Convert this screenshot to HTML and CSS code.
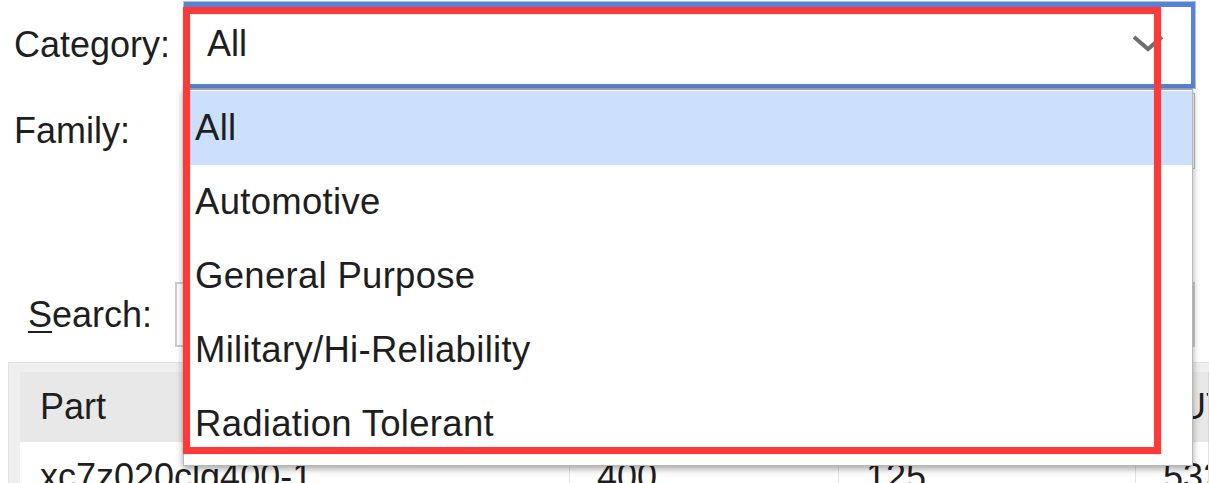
FILE: index.html
```html
<!DOCTYPE html>
<html>
<head>
<meta charset="utf-8">
<link rel="stylesheet" href="styles.css">
</head>
<body>
<div class="form">
  <div class="field category">
    <span class="field-label">Category:</span>
    <div class="combo">
      <span class="combo-value">All</span>
      <svg class="chevron" viewBox="0 0 32 18" width="32" height="18"><path d="M2 2 L16 14 L30 2" fill="none" stroke="#6e6e6e" stroke-width="4"/></svg>
    </div>
  </div>
  <div class="field family">
    <span class="field-label">Family:</span>
    <div class="combo-plain"></div>
  </div>
  <div class="field search">
    <span class="field-label search-label"><u>S</u>earch:</span>
    <div class="search-input"></div>
  </div>
</div>

<div class="table">
  <div class="trow thead">
    <div class="cell first">Part</div>
    <div class="cell">I/O Pin Count</div>
    <div class="cell">Available IOBs</div>
    <div class="cell">LUT Elements</div>
  </div>
  <div class="trow tbody">
    <div class="cell first">xc7z020clg400-1</div>
    <div class="cell">400</div>
    <div class="cell">125</div>
    <div class="cell">53200</div>
  </div>
</div>

<div class="dropdown">
  <div class="option selected">All</div>
  <div class="option">Automotive</div>
  <div class="option">General Purpose</div>
  <div class="option">Military/Hi-Reliability</div>
  <div class="option">Radiation Tolerant</div>
</div>

<div class="annotation"></div>
</body>
</html>
```
FILE: styles.css
```css
html, body {
  margin: 0;
  padding: 0;
}
body {
  width: 1209px;
  height: 483px;
  overflow: hidden;
  position: relative;
  background: #ffffff;
  font-family: "Liberation Sans", Arial, sans-serif;
  font-size: 36px;
  color: #1e1e1e;
}

.form {
  padding-left: 14px;
}
.field {
  display: flex;
  align-items: center;
}
.field-label {
  width: 170px;
  flex: none;
  line-height: 40px;
  white-space: nowrap;
}
.category {
  margin-top: 2px;
  height: 86px;
}
.combo {
  width: 1011px;
  height: 86px;
  box-sizing: border-box;
  border: 4px solid #5782d5;
  border-top-width: 5px;
  box-shadow: 0 0 0 1px #a9c0ea;
  display: flex;
  align-items: center;
  padding: 0 27px 4px 19px;
  line-height: 40px;
  background: #fff;
}
.combo-value {
  flex: 1;
}
.chevron {
  flex: none;
  display: block;
}
.family {
  height: 86px;
}
.combo-plain {
  width: 1011px;
  height: 76px;
  box-sizing: border-box;
  border: 1px solid #bdbdbd;
}
.search {
  margin-top: 108px;
  height: 65px;
}
.search-label {
  width: 147px;
  margin-left: 14px;
}
.search-label u {
  text-decoration-thickness: 2px;
  text-underline-offset: 4px;
}
.search-input {
  width: 1020px;
  height: 65px;
  box-sizing: border-box;
  border: 2px solid #cdcdcd;
}

.table {
  margin: 15px 0 0 8px;
  background: #efefef;
  border-top: 1px solid #e2e2e2;
  border-left: 1px solid #e2e2e2;
  padding: 9px 0 0 11px;
}
.trow {
  display: grid;
  grid-template-columns: 550px 269px 297px 1fr;
  height: 70px;
}
.thead {
  background: #e8e8e8;
}
.tbody {
  background: #ffffff;
}
.cell {
  line-height: 70px;
  padding-left: 27px;
  white-space: nowrap;
  overflow: hidden;
  border-right: 1px solid #d6d6d6;
}
.thead .cell:last-child {
  padding-left: 24px;
}
.cell.first {
  padding-left: 20px;
}
.tbody .cell {
  border-right-color: #e2e2e2;
}

.dropdown {
  position: absolute;
  left: 183px;
  top: 88px;
  width: 1010px;
  height: 378px;
  box-sizing: border-box;
  background: #ffffff;
  border: 1px solid #b8b8b8;
  border-top: 2px solid #9c9c9c;
  padding-top: 1px;
  box-shadow: 0 3px 7px rgba(0, 0, 0, 0.35);
  overflow: hidden;
}
.option {
  height: 74px;
  line-height: 74px;
  padding-left: 11px;
  white-space: nowrap;
  font-size: 36.5px;
  letter-spacing: 0.3px;
}
.option.selected {
  background: #cce0fb;
}

.annotation {
  position: absolute;
  left: 183px;
  top: 7px;
  width: 978px;
  height: 447px;
  box-sizing: border-box;
  border: 7px solid #fd3a3a;
  box-shadow: 0 0 1px rgba(255, 80, 80, 0.6), inset 0 0 1px rgba(255, 80, 80, 0.6);
}
```
